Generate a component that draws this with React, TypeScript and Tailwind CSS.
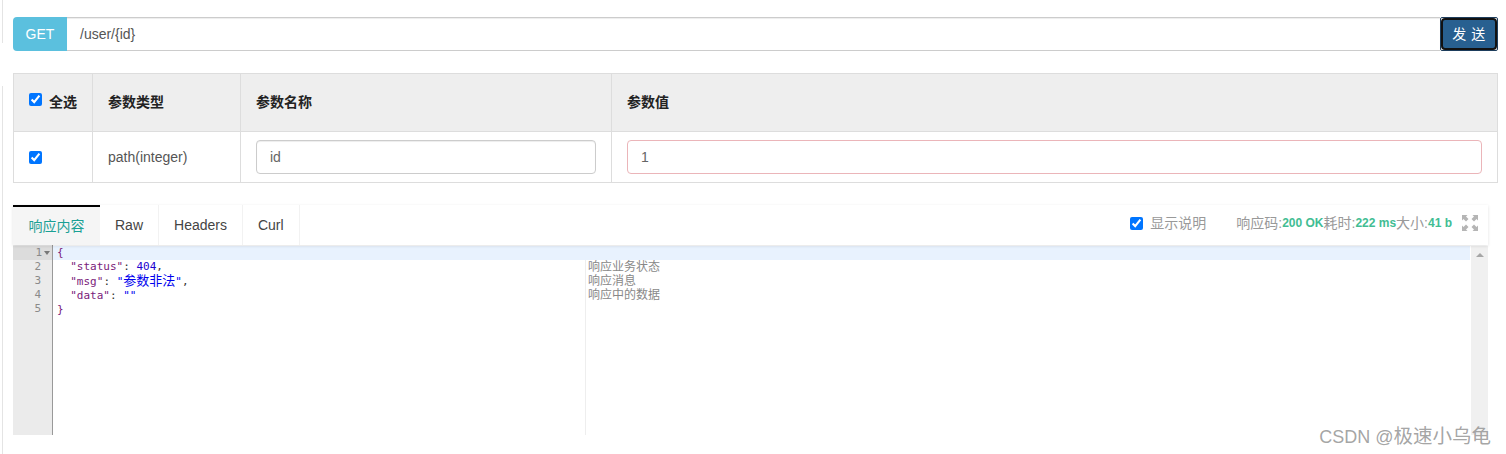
import { useState } from "react";

const font = "font-['Liberation_Sans','Noto_Sans_CJK_SC',sans-serif]";

function Check({ defaultChecked = true }: { defaultChecked?: boolean }) {
  return (
    <input
      type="checkbox"
      defaultChecked={defaultChecked}
      className="w-[13px] h-[13px] m-0 accent-[#0075ff]"
    />
  );
}

function Expand() {
  return (
    <svg width="16" height="16" viewBox="0 0 16 16" fill="#b5b5b5">
      <path d="M0 0h5.5L4 1.5 6.5 4 4 6.5 1.5 4 0 5.5zM16 0v5.5L14.5 4 12 6.5 9.5 4 12 1.5 10.5 0zM0 16v-5.5L1.5 12 4 9.5 6.5 12 4 14.5 5.5 16zM16 16h-5.5l1.500-1.500L9.500 12 12 9.500l2.500 2.500 1.500-1.500z" />
    </svg>
  );
}

const tabs = ["响应内容", "Raw", "Headers", "Curl"];

export default function App() {
  const [tab, setTab] = useState(0);

  return (
    <div className={`${font} relative flex w-[1506px] h-[454px] overflow-hidden bg-white text-[14px] text-[#555]`}>
      {/* page edge behind the panel */}
      <div className="w-[3px] shrink-0 flex flex-col">
        <div className="h-[43px] border-r border-[#e4e4e4]" />
        <div className="h-[43px]" />
        <div className="flex-1 border-r border-[#e4e4e4]" />
      </div>

      <div className="w-[1485px] ml-[10px] pt-[17px] flex flex-col">
        {/* request bar */}
        <div className="flex h-[34px]">
          <div className="w-[54px] shrink-0 flex items-center justify-center rounded-l-[4px] bg-[#5bc0de] text-white">
            GET
          </div>
          <div className="flex-1 flex items-center pl-[13px] border-y border-[#ccc] shadow-[inset_0_1px_1px_rgba(0,0,0,0.075)] text-[#555]">
            /user/{"{id}"}
          </div>
          <button className="w-[58px] shrink-0 p-0 bg-white border border-[#1d3d5c] rounded-[2px]">
            <span className="h-full flex items-center justify-center rounded-[4px] border-2 border-[#111] bg-[#286090] text-white text-[14px] tracking-[0.5px]">
              发 送
            </span>
          </button>
        </div>

        {/* params table */}
        <div className="mt-[22px] h-[110px] border border-[#ddd] flex flex-col">
          <div className="h-[58px] flex bg-[#eee] border-b border-[#ddd] font-bold text-[14px] text-[#222]">
            <div className="w-[79px] shrink-0 flex items-center pl-[15px] gap-[7px] border-r border-[#ddd]">
              <span className="flex -mt-[6px]"><Check /></span>
              <span>全选</span>
            </div>
            <div className="w-[148px] shrink-0 flex items-center pl-[15px] border-r border-[#ddd]">参数类型</div>
            <div className="w-[371px] shrink-0 flex items-center pl-[15px] border-r border-[#ddd]">参数名称</div>
            <div className="flex-1 flex items-center pl-[15px]">参数值</div>
          </div>
          <div className="flex-1 flex">
            <div className="w-[79px] shrink-0 flex items-center pl-[15px] border-r border-[#ddd]">
              <Check />
            </div>
            <div className="w-[148px] shrink-0 flex items-center pl-[15px] border-r border-[#ddd]">path(integer)</div>
            <div className="w-[371px] shrink-0 flex items-center px-[15px] border-r border-[#ddd]">
              <div className="w-full h-[34px] flex items-center pl-[13px] border border-[#ccc] rounded-[4px] text-[#666] shadow-[inset_0_1px_1px_rgba(0,0,0,0.075)]">
                id
              </div>
            </div>
            <div className="flex-1 flex items-center px-[15px]">
              <div className="w-full h-[34px] flex items-center pl-[13px] border border-[#ebb5b9] rounded-[4px] text-[#666]">
                1
              </div>
            </div>
          </div>
        </div>

        {/* response tabs */}
        <div className="mt-[22px] w-[1475px] h-[40px] flex items-stretch shadow-[0_1px_3px_rgba(0,0,0,0.12)] relative z-10 bg-white">
          {tabs.map((t, i) => (
            <button
              key={t}
              onClick={() => setTab(i)}
              className={
                i === tab
                  ? "w-[87px] border-t-2 border-black bg-[#f5f5f5] text-[#1aa094] text-[14px]"
                  : "px-[15px] border-r border-[#f2f2f2] text-[#444] text-[14px]"
              }
            >
              {t}
            </button>
          ))}
          <div className="flex-1 flex items-center justify-end pr-[10px] pb-[4px] text-[14px] text-[#999]">
            <span className="flex mr-[7px]"><Check /></span>
            <span>显示说明</span>
            <span className="ml-[30px]">响应码:</span>
            <span className="font-bold text-[12px] text-[#42bd93]">200 OK</span>
            <span>耗时:</span>
            <span className="font-bold text-[12px] text-[#42bd93]">222 ms</span>
            <span>大小:</span>
            <span className="font-bold text-[12px] text-[#42bd93]">41 b</span>
            <span className="flex ml-[10px]"><Expand /></span>
          </div>
        </div>

        {/* response editor */}
        <div className="w-[1475px] h-[190px] flex font-['DejaVu_Sans_Mono','Noto_Sans_CJK_SC',monospace] text-[11px] leading-[14px]">
          <div className="w-[40px] shrink-0 bg-[#ebebeb] border-r border-[#999] text-[#8a8a8a] pt-[1px]">
            <div className="h-[14px] bg-[#dcdcdc] flex justify-end pr-[2px] items-center gap-[2px]">
              1
              <span className="w-0 h-0 border-x-[3px] border-x-transparent border-t-[4px] border-t-[#777]" />
            </div>
            {[2, 3, 4, 5].map((n) => (
              <div key={n} className="pr-[11px] text-right">{n}</div>
            ))}
          </div>
          <div className="flex-1 relative flex pt-[1px]">
            <div className="w-[533px] shrink-0 border-r border-[#eee]">
              <div className="h-[14px] pl-[4px] -mr-[885px] bg-[#e8f2fe] text-[#7a1a7a]">{"{"}</div>
              <div className="pl-[4px] whitespace-pre text-[#333]">
                {"  "}<span className="text-[#7a1a7a]">"status"</span>: <span className="text-[#1c00cf]">404</span>,
              </div>
              <div className="pl-[4px] whitespace-pre text-[#333]">
                {"  "}<span className="text-[#7a1a7a]">"msg"</span>: <span className="text-[#0000ee]">"<span className="text-[13px]">参数非法</span>"</span>,
              </div>
              <div className="pl-[4px] whitespace-pre text-[#333]">
                {"  "}<span className="text-[#7a1a7a]">"data"</span>: <span className="text-[#0000ee]">""</span>
              </div>
              <div className="pl-[4px] text-[#7a1a7a]">{"}"}</div>
            </div>
            <div className={`flex-1 pl-[2px] pt-[14px] text-[12px] leading-[14px] text-[#888] relative ${font}`}>
              <div>响应业务状态</div>
              <div>响应消息</div>
              <div>响应中的数据</div>
            </div>
            <div className="w-[17px] shrink-0 bg-[#f0f0f0] flex justify-center pt-[7px] relative">
              <span className="w-0 h-0 border-x-[4px] border-x-transparent border-b-[4px] border-b-[#a6a6a6]" />
            </div>
          </div>
        </div>
      </div>

      {/* CSDN watermark */}
      <div className="absolute right-[15px] top-[424px] text-[18px] leading-[24px] text-[#9a9a9a]/90 whitespace-nowrap">
        CSDN @<span className="text-[19.5px]">极速小乌龟</span>
      </div>
    </div>
  );
}
